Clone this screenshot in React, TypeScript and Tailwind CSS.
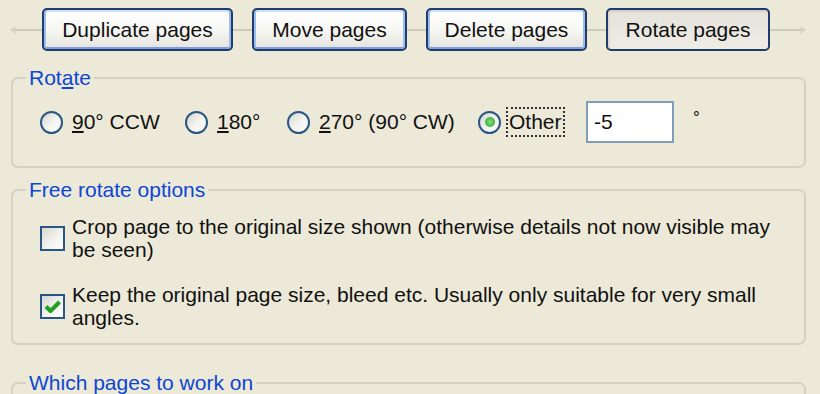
import clsx from 'clsx'

const ink = 'text-[#111]'

function TabCap({ side }: { side: 'left' | 'right' }) {
  const left = side === 'left'
  return (
    <svg width={left ? 42 : 36} height="12" viewBox={left ? '0 0 42 12' : '0 0 36 12'} className="shrink-0">
      {left ? (
        <>
          <line x1="12" y1="6" x2="42" y2="6" stroke="#CDCABB" strokeWidth="2" />
          <path d="M16 3 L11 6 L16 9" fill="none" stroke="#D8D5C6" strokeWidth="1.5" />
        </>
      ) : (
        <>
          <line x1="0" y1="6" x2="34" y2="6" stroke="#CDCABB" strokeWidth="2" />
          <path d="M30 3 L35 6 L30 9" fill="none" stroke="#D8D5C6" strokeWidth="1.5" />
        </>
      )}
    </svg>
  )
}

function Connector({ w }: { w: string }) {
  return <div className={clsx('h-[2px] shrink-0 bg-[#CDCABB]', w)} />
}

function XpButton({ label, width, pressed }: { label: string; width: string; pressed?: boolean }) {
  return (
    <button
      className={clsx(
        'h-[43px] shrink-0 rounded-[5px] border-2 border-[#1F3D6B] text-[21px] leading-none',
        ink,
        width,
        pressed
          ? 'bg-linear-to-b from-[#E4E2DA] to-[#EEECE5] shadow-[inset_0_2px_0_#D4D2C9,inset_2px_0_0_#DCDAD2]'
          : 'bg-linear-to-b from-white via-[#F7F7F4] to-[#E5E4DD] shadow-[inset_2px_0_0_#9DBBEC,inset_-2px_0_0_#9DBBEC,inset_0_2px_0_#CFE0F8,inset_0_-2px_0_#7C9BE0]',
      )}
    >
      {label}
    </button>
  )
}

function Group({
  title,
  children,
  className,
}: {
  title: React.ReactNode
  children?: React.ReactNode
  className?: string
}) {
  return (
    <fieldset
      className={clsx(
        'mx-[11px] w-[795px] rounded-[7px] border-2 border-[#D5D2C2] pl-[27px]',
        className,
      )}
    >
      <legend className="ml-[-14px] px-[3px] text-[21px] leading-[24px] text-[#0B47D3]">{title}</legend>
      {children}
    </fieldset>
  )
}

function Radio({ checked }: { checked?: boolean }) {
  return (
    <span className="flex h-[23px] w-[23px] shrink-0 items-center justify-center rounded-full border-2 border-[#2A5685] bg-linear-to-br from-[#D6D5CE] via-[#F2F2EE] to-white">
      {checked && (
        <span className="h-[10px] w-[10px] rounded-full bg-radial from-[#7EE27E] to-[#1E9E1E]" />
      )}
    </span>
  )
}

function RadioItem({
  width,
  checked,
  children,
}: {
  width?: string
  checked?: boolean
  children: React.ReactNode
}) {
  return (
    <label className={clsx('flex shrink-0 items-center gap-[9px]', width)}>
      <Radio checked={checked} />
      {children}
    </label>
  )
}

function Checkbox({ checked }: { checked?: boolean }) {
  return (
    <span className="flex h-[25px] w-[25px] shrink-0 items-center justify-center border-2 border-[#2A5685] bg-linear-to-br from-[#D9D8D1] via-[#F0F0EC] to-white">
      {checked && (
        <svg width="19" height="17" viewBox="0 0 19 17" className="shrink-0">
          <path d="M3 8.5 L7.5 13 L16.5 4" fill="none" stroke="#21A121" strokeWidth="4" strokeLinejoin="round" />
        </svg>
      )}
    </span>
  )
}

function CheckRow({ checked, children }: { checked?: boolean; children: React.ReactNode }) {
  return (
    <label className="flex items-center gap-[7px]">
      <Checkbox checked={checked} />
      <span className="w-[725px] leading-[23px]">{children}</span>
    </label>
  )
}

export default function App() {
  return (
    <div
      className={clsx(
        "h-[394px] w-[820px] overflow-hidden bg-[#ECE9D8] font-['Liberation_Sans',Arial,sans-serif] text-[21px]",
        ink,
      )}
    >
      <div className="flex items-center pt-[8px]">
        <TabCap side="left" />
        <XpButton label="Duplicate pages" width="w-[191px]" />
        <Connector w="w-[19px]" />
        <XpButton label="Move pages" width="w-[155px]" />
        <Connector w="w-[19px]" />
        <XpButton label="Delete pages" width="w-[161px]" />
        <Connector w="w-[19px]" />
        <XpButton label="Rotate pages" width="w-[164px]" pressed />
        <TabCap side="right" />
      </div>

      <Group
        className="mt-[15px] pt-[11px] pb-[23px]"
        title={
          <>
            Rot<u className="underline-offset-2">a</u>te
          </>
        }
      >
        <div className="flex items-center">
          <RadioItem width="w-[145px]">
            <span>
              <u className="underline-offset-2">9</u>0° CCW
            </span>
          </RadioItem>
          <RadioItem width="w-[102px]">
            <span>
              <u className="underline-offset-2">1</u>80°
            </span>
          </RadioItem>
          <RadioItem width="w-[191px]">
            <span>
              <u className="underline-offset-2">2</u>70° (90° CW)
            </span>
          </RadioItem>
          <RadioItem width="w-[108px]" checked>
            <span className="-ml-[4px] border-2 border-dotted border-[#333] px-[1px] leading-[26px]">Other</span>
          </RadioItem>
          <div className="flex h-[42px] w-[88px] items-center border-2 border-[#7F9DB9] bg-white pl-[6px]">-5</div>
          <span className="ml-[19px] self-start pt-[4px] text-[17px]">°</span>
        </div>
      </Group>

      <Group className="mt-[10px] pt-[13px] pb-[14px]" title="Free rotate options">
        <div className="flex flex-col gap-[22px]">
          <CheckRow>Crop page to the original size shown (otherwise details not now visible may be seen)</CheckRow>
          <CheckRow checked>
            Keep the original page size, bleed etc. Usually only suitable for very small angles.
          </CheckRow>
        </div>
      </Group>

      <Group className="mt-[26px] h-[80px]" title="Which pages to work on" />
    </div>
  )
}
